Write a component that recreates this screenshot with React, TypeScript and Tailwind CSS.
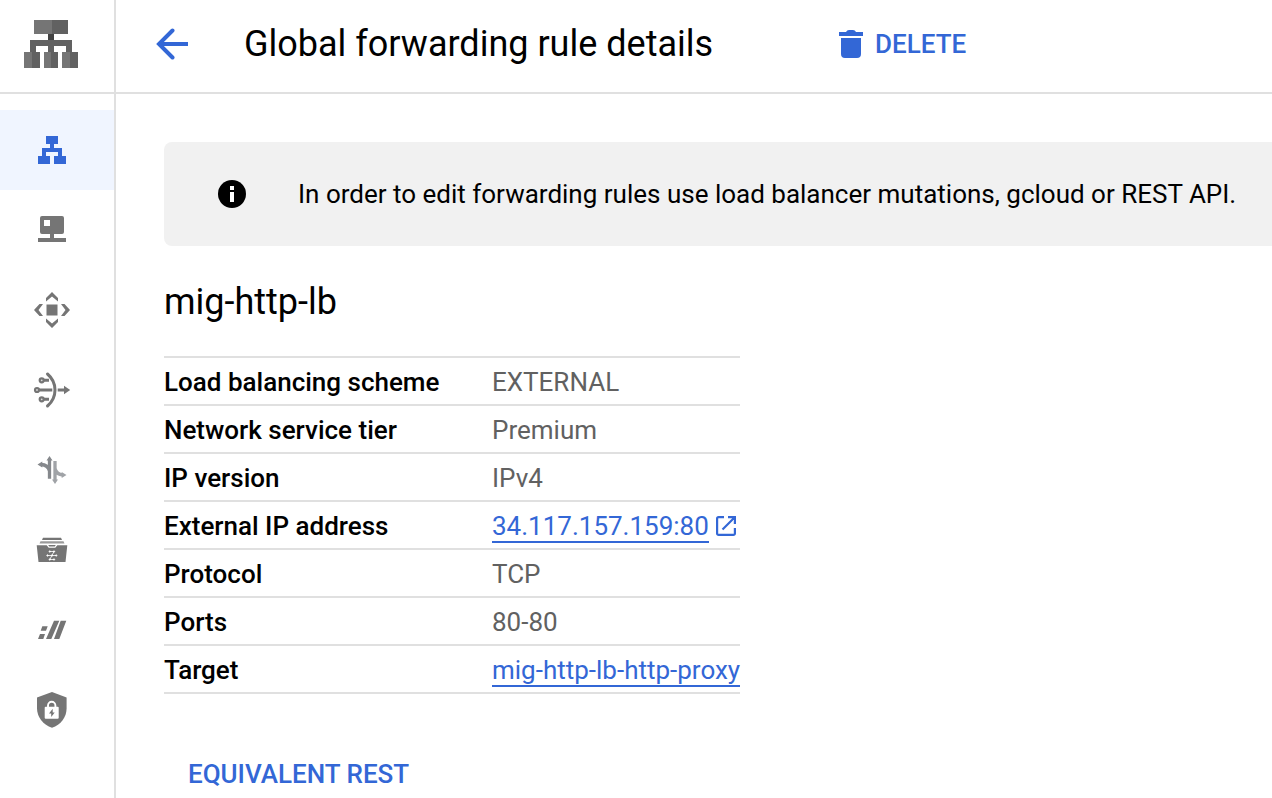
import React from "react";

type IconProps = { children: React.ReactNode };

function NavIcon({ children }: IconProps) {
  return (
    <svg width="40" height="40" viewBox="0 0 40 40" fill="#757575" className="block">
      {children}
    </svg>
  );
}

const navIcons: { name: string; icon: React.ReactNode }[] = [
  {
    name: "balancing",
    icon: (
      <path
        fill="#3367d6"
        d="M14 6h12v8h-4v4h8v8h4v8H22v-8h4v-4H14v4h4v8H6v-8h4v-8h8v-4h-4z"
      />
    ),
  },
  {
    name: "dns",
    icon: (
      <path
        fillRule="evenodd"
        d="M10 6h20a2 2 0 0 1 2 2v14a2 2 0 0 1-2 2h-8v4h12v4H6v-4h12v-4h-8a2 2 0 0 1-2-2V8a2 2 0 0 1 2-2zM12 10v6h6v-6z"
      />
    ),
  },
  {
    name: "cdn",
    icon: (
      <>
        <rect x="14.5" y="14.5" width="11" height="11" />
        <path d="M20 2l6 6v3.600l-6-5-6 5V8zM20 38l6-6v-3.600l-6 5-6-5V32zM2 20l5.500-6H11l-4.500 6 4.500 6H7.500zM38 20l-5.500-6H29l4.500 6-4.500 6h3.500z" />
      </>
    ),
  },
  {
    name: "nat",
    icon: (
      <>
        <g fill="none" stroke="#757575">
          <path strokeWidth="3" strokeLinecap="round" d="M15.500 4C20.500 8.300 23 13.500 23 20s-2.500 11.700-7.500 16" />
          <path strokeWidth="3" d="M12 10.300h5M7 20h13.300M12 29.300h5M25.700 20H33" />
          <g strokeWidth="2.200" fill="#d8d8d8">
            <circle cx="9.700" cy="10.300" r="2" />
            <circle cx="5" cy="20" r="2" />
            <circle cx="9.700" cy="29.300" r="2" />
          </g>
        </g>
        <path d="M32 15.700l6.200 4.300-6.200 4.300z" />
      </>
    ),
  },
  {
    name: "traffic",
    icon: (
      <>
        <g fill="none" strokeWidth="3.300">
          <path stroke="#85888c" d="M17.500 28.700V9M17.500 21c-1-4-4-6.300-8.500-6.500" />
          <path stroke="#a0a3a7" d="M23 11v20M23 18.500c1 4 3.500 6.200 8 6.500" />
        </g>
        <path fill="#85888c" d="M14.500 10.500l3-4.500 3 4.500zM10.300 11.500v6l-4.800-3z" />
        <path fill="#a0a3a7" d="M20 29.500l3 4.500 3-4.500zM29.700 22v6l4.800-3z" />
      </>
    ),
  },
  {
    name: "directory",
    icon: (
      <>
        <path d="M11 7.700h18l1 2.300H10z" />
        <path fill="#9a9a9a" d="M8.500 11.300h23l1 2.300h-25z" />
        <path d="M4.700 15.300h10l2 2.400h6.600l2-2.400h10L33.500 32h-27zM16.200 15h7.600l-1 1.500h-5.600z" />
        <g stroke="#fff" strokeWidth=".8" fill="#fff">
          <path d="M17.800 21.500H22M15.500 25.500h8.700M17.800 29.500H22M22 21.500l-4.200 8" />
          <circle cx="17.800" cy="21.500" r=".7" />
          <circle cx="22" cy="21.500" r=".7" />
          <circle cx="15.500" cy="25.500" r=".7" />
          <circle cx="20" cy="25.500" r=".7" />
          <circle cx="24.200" cy="25.500" r=".7" />
          <circle cx="17.800" cy="29.500" r=".7" />
          <circle cx="22" cy="29.500" r=".7" />
        </g>
      </>
    ),
  },
  {
    name: "media",
    icon: (
      <path d="M22 10.700h5.300L19.300 29H14zM28.700 10.700h5.600L27.300 29H22zM10.300 16.300h5.400L14 20.700H8.700zM8 24h5l-1.700 5H6z" />
    ),
  },
  {
    name: "security",
    icon: (
      <>
        <path d="M20 2l14.600 5.400v10.800c0 9-5.800 16.500-14.600 19.600C11.200 34.700 5 27.200 5 18.200V7.400z" />
        <rect x="12.700" y="16.700" width="14" height="12" rx="1" fill="#fff" />
        <path d="M16 17v-1.500a3.700 3.700 0 0 1 7.400 0V17" fill="none" stroke="#fff" strokeWidth="1.900" />
        <path d="M20.700 18.700l-3.700 4.800h2.200v3.500l3.500-4.500h-2z" />
      </>
    ),
  },
];

function ProductLogo() {
  return (
    <svg width="54" height="48" viewBox="0 0 54 48" shapeRendering="crispEdges">
      <path fill="#616161" d="M6 20h42v12h-6v-6H30v6h-6v-6H12v6H6z" />
      <path fill="#424242" d="M24 14h6v6h-6z" />
      <path fill="#757575" d="M10 0h18v14H10zM0 32h8v16H0zM20 32h7v16h-7zM38 32h8v16h-8z" />
      <path fill="#616161" d="M28 0h16v14H28zM8 32h8v16H8zM27 32h7v16h-7zM46 32h8v16h-8z" />
    </svg>
  );
}

function OpenInNew() {
  return (
    <svg width="20" height="20" viewBox="0 0 20 20" fill="none" stroke="#3367d6" strokeWidth="2.200" className="ml-[7px] block">
      <path d="M8 1.100H2.600a1.500 1.500 0 0 0-1.500 1.500v14.800a1.500 1.500 0 0 0 1.500 1.500h14.800a1.500 1.500 0 0 0 1.500-1.500V12M12 1.100h6.900V8M18.500 1.500L6.500 13.500" />
    </svg>
  );
}

const linkClass = "block h-[34px] border-b-2 border-[#3367d6] leading-[34px] whitespace-nowrap text-[#3367d6]";

const rows: { label: string; value: React.ReactNode }[] = [
  { label: "Load balancing scheme", value: "EXTERNAL" },
  { label: "Network service tier", value: "Premium" },
  { label: "IP version", value: "IPv4" },
  {
    label: "External IP address",
    value: (
      <>
        <a className={linkClass}>34.117.157.159:80</a>
        <OpenInNew />
      </>
    ),
  },
  { label: "Protocol", value: "TCP" },
  { label: "Ports", value: "80-80" },
  { label: "Target", value: <a className={linkClass}>mig-http-lb-http-proxy</a> },
];

export default function App() {
  return (
    <div className="flex h-[798px] w-[1272px] overflow-hidden bg-white font-['Roboto',sans-serif] text-black">
      <aside className="flex w-[116px] shrink-0 flex-col border-r-2 border-[#e0e0e0]">
        <div className="h-[94px] shrink-0 border-b-2 border-[#e0e0e0] pt-5 pl-6">
          <ProductLogo />
        </div>
        <nav className="pt-4">
          {navIcons.map((item, i) => (
            <div key={item.name} className={`flex h-20 items-center pl-8 ${i === 0 ? "bg-[#f0f5ff]" : ""}`}>
              <NavIcon>{item.icon}</NavIcon>
            </div>
          ))}
        </nav>
      </aside>

      <main className="flex min-w-0 flex-1 flex-col">
        <header className="flex h-[94px] shrink-0 items-center border-b-2 border-[#e0e0e0] pb-1 pl-10">
          <svg width="32" height="32" viewBox="0 0 32 32" fill="none" stroke="#3367d6" strokeWidth="4" className="block shrink-0">
            <path d="M32 16H4" />
            <path strokeLinecap="round" d="M16.500 2.500L3 16l13.500 13.500" />
          </svg>
          <h1 className="ml-14 w-[595px] text-[36px] leading-[48px] whitespace-nowrap">Global forwarding rule details</h1>
          <button className="flex items-center text-[26px] font-medium text-[#3367d6]">
            <svg width="24" height="28" viewBox="0 0 24 28" fill="#3367d6" className="mr-3 block">
              <path d="M0 2h7q1-2 3-2h4q2 0 3 2h7v4H0zM2 8h20v16a4 4 0 0 1-4 4H6a4 4 0 0 1-4-4z" />
            </svg>
            DELETE
          </button>
        </header>

        <section className="flex flex-col items-start pt-12 pl-12">
          <div className="flex h-[104px] w-full items-center rounded-l-lg bg-[#f1f1f1] pl-[54px]">
            <svg width="28" height="28" viewBox="0 0 28 28" className="block shrink-0">
              <circle cx="14" cy="14" r="14" />
              <path fill="#fff" d="M12 6h4v4h-4zM12 12h4v10h-4z" />
            </svg>
            <p className="ml-[52px] text-[26px] leading-10 whitespace-nowrap">
              In order to edit forwarding rules use load balancer mutations, gcloud or REST API.
            </p>
          </div>

          <h2 className="mt-8 text-[36px] leading-[48px]">mig-http-lb</h2>

          <dl className="mt-[30px] w-[576px] border-t-2 border-[#e0e0e0] text-[26px]">
            {rows.map((row) => (
              <div key={row.label} className="flex h-12 items-center border-b-2 border-[#e0e0e0] pt-0.5">
                <dt className="w-[328px] shrink-0 font-medium whitespace-nowrap">{row.label}</dt>
                <dd className="flex items-center text-[#616161]">{row.value}</dd>
              </div>
            ))}
          </dl>

          <button className="mt-[60px] ml-6 text-[26px] leading-10 font-medium text-[#3367d6]">EQUIVALENT REST</button>
        </section>
      </main>
    </div>
  );
}
